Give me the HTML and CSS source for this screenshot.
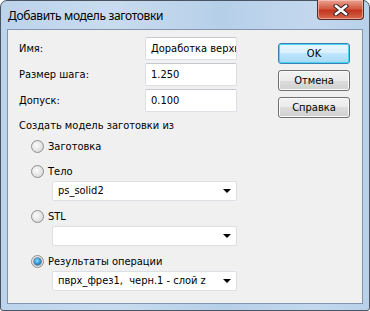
FILE: index.html
```
<!DOCTYPE html>
<html>
<head>
<title>Добавить модель заготовки</title>
<link rel="stylesheet" href="styles.css">
</head>
<body>
<div class="window">
  <div class="titlebar">
    <span class="title">Добавить модель заготовки</span>
    <div class="close">
      <svg width="16" height="12" viewBox="0 0 16 12">
        <path d="M3 2 L13 10 M13 2 L3 10" stroke="#3a2020" stroke-width="4.5" stroke-linecap="square"/>
        <path d="M3 2 L13 10 M13 2 L3 10" stroke="#ffffff" stroke-width="2.5" stroke-linecap="square"/>
      </svg>
    </div>
  </div>
  <div class="client">
    <div class="top">
      <div class="fields">
        <div class="field"><span class="label">Имя:</span><div class="input">Доработка верхней</div></div>
        <div class="field"><span class="label">Размер шага:</span><div class="input">1.250</div></div>
        <div class="field"><span class="label">Допуск:</span><div class="input">0.100</div></div>
      </div>
      <div class="buttons">
        <div class="btn default">OK</div>
        <div class="btn">Отмена</div>
        <div class="btn">Справка</div>
      </div>
    </div>
    <div class="group">Создать модель заготовки из</div>
    <div class="option first"><span class="radio"></span>Заготовка</div>
    <div class="option"><span class="radio"></span>Тело</div>
    <div class="combo">ps_solid2<span class="arrow"></span></div>
    <div class="option"><span class="radio"></span>STL</div>
    <div class="combo"><span class="arrow"></span></div>
    <div class="option"><span class="radio checked"></span>Результаты операции</div>
    <div class="combo">пврх_фрез1,&nbsp; черн.1 - слой z<span class="arrow"></span></div>
  </div>
</div>
</body>
</html>
```

FILE: styles.css
```
* { box-sizing: border-box; }
body { margin: 0; background: #ffffff; }

.window {
  width: 370px;
  height: 311px;
  border: 1px solid #4a5563;
  border-radius: 7px 7px 3px 3px;
  background: linear-gradient(to right, #bcd3ec, #c9dcef 30%, #b6cfe9 60%, #c3d8ee 85%, #b8d0ea);
  padding: 0 6px 6px 6px;
  display: flex;
  flex-direction: column;
  font-family: "DejaVu Sans Condensed", "DejaVu Sans", sans-serif;
  font-size: 11px;
  color: #000000;
}

.titlebar {
  height: 28px;
  display: flex;
  align-items: flex-start;
  position: relative;
}
.title {
  font-family: "Noto Sans", sans-serif;
  font-size: 12px;
  letter-spacing: -0.35px;
  margin-top: 6px;
  margin-left: 1px;
}
.close {
  position: absolute;
  right: -1px;
  top: -1px;
  width: 47px;
  height: 20px;
  border: 1px solid #5a2a26;
  border-top: none;
  border-radius: 0 0 4px 4px;
  background: linear-gradient(#e8a493, #d45a43 45%, #c2351f 55%, #d7684c);
  box-shadow: inset 0 0 0 1px rgba(255, 210, 200, 0.55);
  display: flex;
  align-items: center;
  justify-content: center;
}

.client {
  flex: 1;
  background: #f0f0f0;
  border: 1px solid #8394ad;
  padding: 7px 11px 0 11px;
}

.top { display: flex; align-items: flex-start; }
.fields { width: 218px; display: flex; flex-direction: column; gap: 3px; }
.field { display: flex; align-items: center; height: 23px; }
.label { width: 126px; }
.input {
  width: 92px;
  height: 23px;
  background: #ffffff;
  border: 1px solid #dcdfe3;
  border-top-color: #c5c9cf;
  border-radius: 2px;
  padding: 0 0 0 5px;
  line-height: 21px;
  white-space: nowrap;
  overflow: hidden;
}

.buttons {
  margin-left: 41px;
  margin-top: 6px;
  display: flex;
  flex-direction: column;
  gap: 6px;
}
.btn {
  width: 72px;
  height: 21px;
  border: 1px solid #707070;
  border-radius: 3px;
  background: linear-gradient(#f2f2f2, #ebebeb 50%, #dddddd 50%, #cfcfcf);
  box-shadow: inset 0 0 0 1px #fbfbfb;
  text-align: center;
  line-height: 19px;
}
.btn.default {
  border-color: #3c7fb1;
  background: linear-gradient(#eaf6fd, #d9f0fc 50%, #bee6fd 50%, #a7d9f5);
  box-shadow: inset 0 0 0 1px #48d4f8;
}

.group { margin-top: 1px; height: 14px; line-height: 14px; }

.option {
  display: flex;
  align-items: center;
  height: 16px;
  padding-left: 12px;
  margin-top: 7px;
}
.option.first { margin-top: 5px; }
.option.first + .option { margin-top: 9px; }
.radio {
  width: 13px;
  height: 13px;
  border-radius: 50%;
  border: 1px solid #8e8f8f;
  background: radial-gradient(circle at 40% 40%, #fbfbfb, #e2e2e2 60%, #cfcfcf);
  margin-right: 4px;
  position: relative;
}
.radio.checked::after {
  content: "";
  position: absolute;
  left: 2px;
  top: 2px;
  width: 7px;
  height: 7px;
  border-radius: 50%;
  background: radial-gradient(circle at 45% 40%, #8ee3ff, #2a8fd6 55%, #0d3f78);
  box-shadow: 0 0 0 0.5px #1b3a5c;
}

.combo {
  margin-left: 33px;
  margin-top: 2px;
  width: 185px;
  height: 20px;
  background: #ffffff;
  border: 1px solid #dcdfe3;
  border-radius: 2px;
  padding-left: 5px;
  line-height: 18px;
  position: relative;
  white-space: nowrap;
}
.arrow {
  position: absolute;
  right: 5px;
  top: 7px;
  border-left: 4px solid transparent;
  border-right: 4px solid transparent;
  border-top: 4px solid #000000;
}
```
